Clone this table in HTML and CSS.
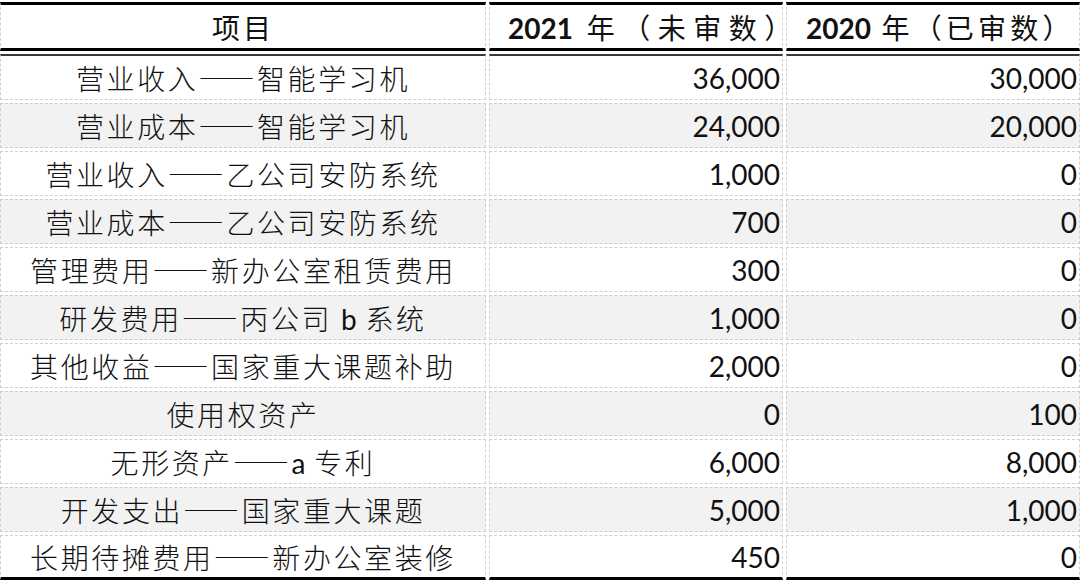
FILE: index.html
```html
<!DOCTYPE html>
<html lang="zh-CN">
<head>
<meta charset="utf-8">
<title>表格</title>
<link rel="stylesheet" href="styles.css">
</head>
<body>
<div class="sheet">
  <div class="row head">
    <div class="cell name"><span>项目</span></div>
    <div class="cell year y21"><span><b>2021</b> 年（未审数）</span></div>
    <div class="cell year y20"><span><b>2020</b> 年（已审数）</span></div>
  </div>
  <div class="row first">
    <div class="cell name"><span>营业收入——智能学习机</span></div>
    <div class="cell num">36,000</div>
    <div class="cell num">30,000</div>
  </div>
  <div class="row alt">
    <div class="cell name"><span>营业成本——智能学习机</span></div>
    <div class="cell num">24,000</div>
    <div class="cell num">20,000</div>
  </div>
  <div class="row">
    <div class="cell name"><span>营业收入——乙公司安防系统</span></div>
    <div class="cell num">1,000</div>
    <div class="cell num">0</div>
  </div>
  <div class="row alt">
    <div class="cell name"><span>营业成本——乙公司安防系统</span></div>
    <div class="cell num">700</div>
    <div class="cell num">0</div>
  </div>
  <div class="row">
    <div class="cell name"><span>管理费用——新办公室租赁费用</span></div>
    <div class="cell num">300</div>
    <div class="cell num">0</div>
  </div>
  <div class="row alt">
    <div class="cell name"><span>研发费用——丙公司 <span class="lat">b</span> 系统</span></div>
    <div class="cell num">1,000</div>
    <div class="cell num">0</div>
  </div>
  <div class="row">
    <div class="cell name"><span>其他收益——国家重大课题补助</span></div>
    <div class="cell num">2,000</div>
    <div class="cell num">0</div>
  </div>
  <div class="row alt">
    <div class="cell name"><span>使用权资产</span></div>
    <div class="cell num">0</div>
    <div class="cell num">100</div>
  </div>
  <div class="row">
    <div class="cell name"><span>无形资产——<span class="lat">a</span> 专利</span></div>
    <div class="cell num">6,000</div>
    <div class="cell num">8,000</div>
  </div>
  <div class="row alt">
    <div class="cell name"><span>开发支出——国家重大课题</span></div>
    <div class="cell num">5,000</div>
    <div class="cell num">1,000</div>
  </div>
  <div class="row last">
    <div class="cell name"><span>长期待摊费用——新办公室装修</span></div>
    <div class="cell num">450</div>
    <div class="cell num">0</div>
  </div>
</div>
</body>
</html>
```
FILE: styles.css
```css
html, body {
  margin: 0;
  padding: 0;
  background: #ffffff;
}
body {
  padding-top: 2px;
  font-family: "Noto Sans CJK SC", "Noto Sans", sans-serif;
  color: #111111;
}
.sheet {
  display: grid;
  grid-template-columns: 486px 294px 294px;
  grid-auto-rows: 45px;
  grid-template-rows: 49px 46px;
  column-gap: 3px;
  row-gap: 3px;
  width: 1080px;
}
.row {
  display: contents;
}
.cell {
  box-sizing: border-box;
  border: 1px dashed #cfcfcf;
  background: #ffffff;
  display: flex;
  align-items: center;
  justify-content: center;
  font-size: 28px;
  font-weight: 300;
  letter-spacing: 2.6px;
  white-space: pre;
  padding: 0 2px;
}
.row.alt .cell {
  background: #f2f2f2;
}
.head .cell {
  border-top: 3px solid #000;
  border-bottom: 3px solid #000;
  font-weight: 400;
  letter-spacing: 3px;
}
.head .cell.year {
  justify-content: flex-start;
  padding-left: 18px;
}
.head .cell.y21 {
  letter-spacing: 7.5px;
}
.head .cell.y20 {
  padding-left: 19px;
  letter-spacing: 4.2px;
}
.head .cell b {
  font-family: "Lato", "Open Sans", sans-serif;
  font-weight: 700;
  font-size: 28px;
  letter-spacing: 0;
}
.first .cell {
  border-top: 2px solid #3a3a3a;
}
.last .cell {
  border-bottom: 3px solid #000;
}
.cell.num {
  justify-content: flex-end;
  font-family: "Lato", "Open Sans", sans-serif;
  font-weight: 400;
  font-size: 28px;
  letter-spacing: 0;
}
.lat {
  font-family: "Lato", "Open Sans", sans-serif;
  font-weight: 400;
  letter-spacing: 0;
}
```
